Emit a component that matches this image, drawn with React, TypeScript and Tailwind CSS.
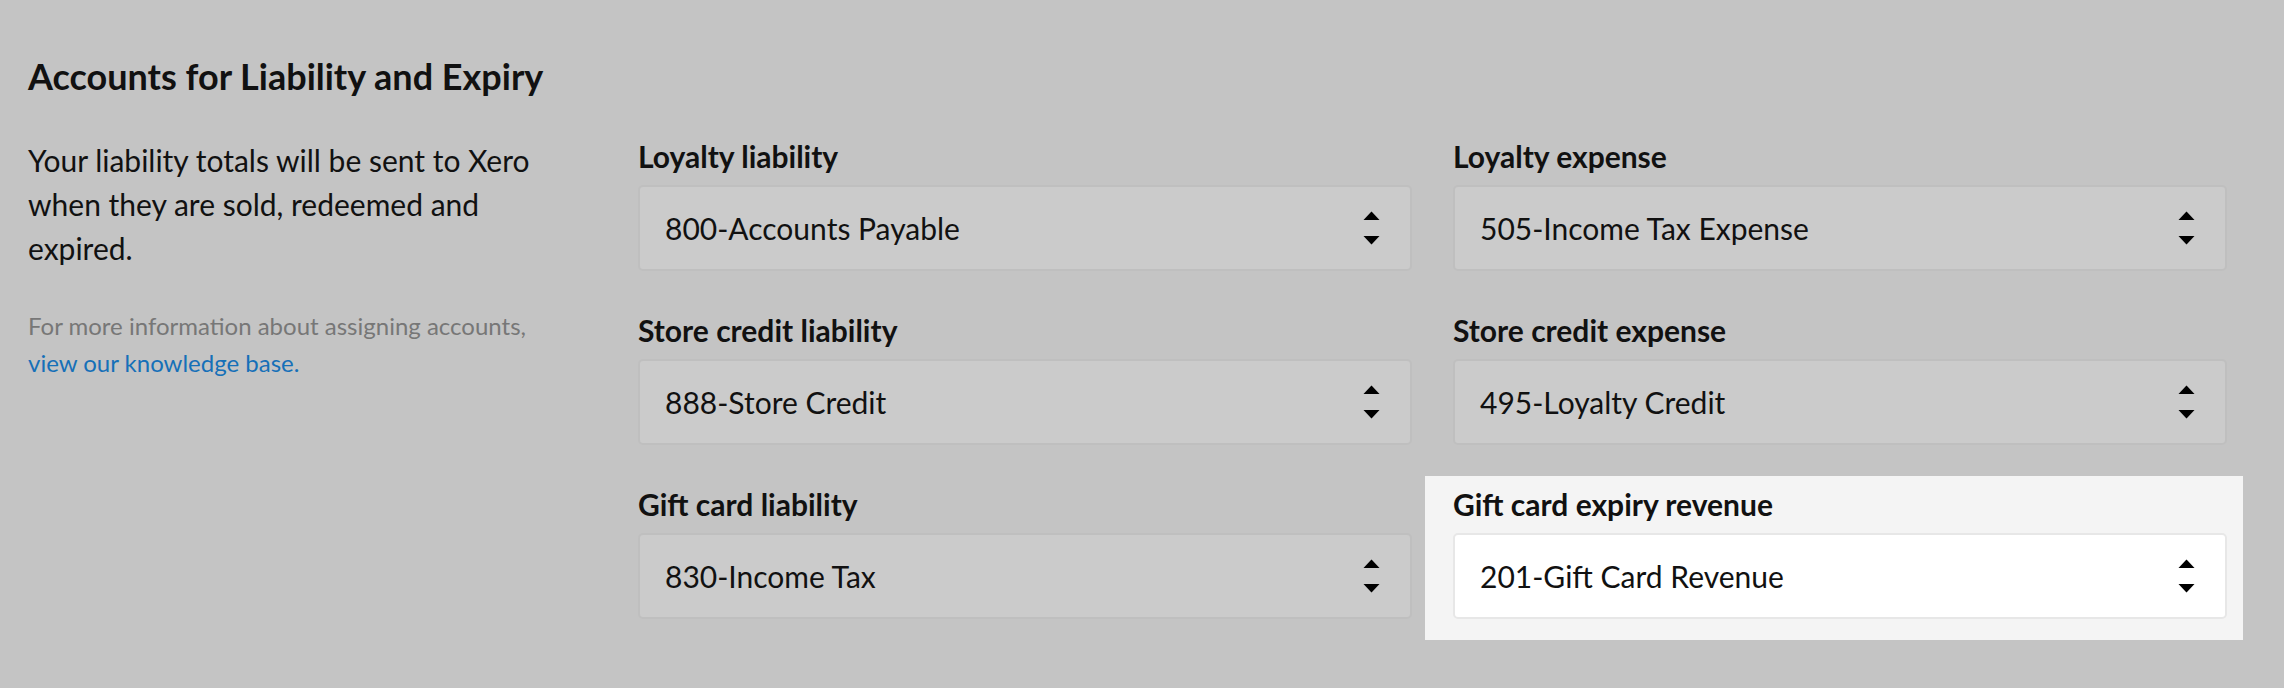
import React from 'react';

type Field = {
    label: string;
    value: string;
    active?: boolean;
};

const fields: Field[] = [
    { label: 'Loyalty liability', value: '800-Accounts Payable' },
    { label: 'Loyalty expense', value: '505-Income Tax Expense' },
    { label: 'Store credit liability', value: '888-Store Credit' },
    { label: 'Store credit expense', value: '495-Loyalty Credit' },
    { label: 'Gift card liability', value: '830-Income Tax' },
    { label: 'Gift card expiry revenue', value: '201-Gift Card Revenue', active: true },
];

const SortArrows: React.FC = () => (
    <svg width="17" height="34" viewBox="0 0 17 34" fill="currentColor" className="shrink-0 text-black">
        <path d="M8.5 0.5 L16.5 9 L0.5 9 Z" strokeLinejoin="round" />
        <path d="M0.5 25 L16.5 25 L8.5 33.5 Z" strokeLinejoin="round" />
    </svg>
);

const AccountSelect: React.FC<{ field: Field }> = ({ field }) => {
    const box = field.active
        ? 'bg-white border-[#e7e7e7]'
        : 'bg-[#cbcbcb] border-[#bfbfbf]';

    return (
        <div
            className={
                field.active
                    ? 'bg-[#f4f4f4] -mt-[10px] pt-[10px] -ml-[28px] pl-[28px] -mr-[16px] pr-[16px] -mb-[21px] pb-[21px]'
                    : ''
            }
        >
            <div className="h-[36px] mb-[11px] text-[30px] leading-[36px] font-bold text-[#111]">
                {field.label}
            </div>
            <div className={`flex items-center justify-between h-[86px] pl-[25px] pr-[30px] rounded-[5px] border-2 ${box}`}>
                <span className="text-[30px] leading-[36px] text-[#111]">{field.value}</span>
                <SortArrows />
            </div>
        </div>
    );
};

const App: React.FC = () => {
    return (
        <div className="min-h-screen bg-[#c4c4c4] font-['Lato',sans-serif] pt-[55px] pl-[28px] pr-[57px]">
            <h2 className="text-[36px] leading-[43px] font-bold text-[#111]">
                Accounts for Liability and Expiry
            </h2>
            <div className="flex mt-[40px]">
                <div className="w-[610px] shrink-0">
                    <p className="w-[530px] text-[30px] leading-[44px] text-[#111]">
                        Your liability totals will be sent to Xero when they are sold, redeemed and expired.
                    </p>
                    <p className="w-[530px] mt-[37px] text-[24px] leading-[37px] text-[#777]">
                        For more information about assigning accounts,{' '}
                        <a href="#" className="text-[#1670b8]">view our knowledge base.</a>
                    </p>
                </div>
                <div className="flex-1 grid grid-cols-2 gap-x-[41px] gap-y-[41px]">
                    {fields.map((f) => (
                        <AccountSelect key={f.label} field={f} />
                    ))}
                </div>
            </div>
        </div>
    );
};

export default App;
